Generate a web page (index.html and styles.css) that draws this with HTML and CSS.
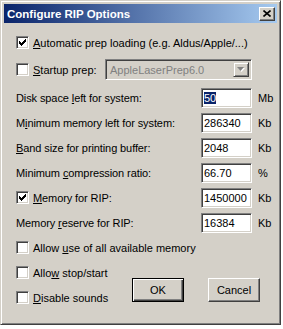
FILE: index.html
```html
<!DOCTYPE html>
<html lang="en">
<head>
  <meta charset="UTF-8" />
  <title>Configure RIP Options</title>
  <link rel="stylesheet" href="styles.css">
</head>
<body>
  <div class="window">
    <div class="titlebar">
      <span class="title">Configure RIP Options</span>
      <button class="close-btn" type="button">
        <svg width="8" height="7" viewBox="0 0 8 7"><path d="M0.5 0.5L7.5 6.5M7.5 0.5L0.5 6.5" stroke="#000" stroke-width="1.6" fill="none"/></svg>
      </button>
    </div>

    <div class="content">
      <div class="row row-first">
        <label class="check">
          <span class="box"><svg width="11" height="11" viewBox="0 0 11 11"><path d="M2 4h1v1h1v1h1v-1h1v-1h1v-1h1v-1h1v3h-1v1h-1v1h-1v1h-1v1h-1v-1h-1v-1h-1z" fill="#000"/></svg></span>
          <span><u>A</u>utomatic prep loading (e.g. Aldus/Apple/...)</span>
        </label>
      </div>

      <div class="row row-combo">
        <label class="check">
          <span class="box"></span>
          <span><u>S</u>tartup prep:</span>
        </label>
        <div class="combo">
          <span class="combo-text">AppleLaserPrep6.0</span>
          <span class="combo-btn">
            <svg width="8" height="5" viewBox="0 0 8 5"><path d="M1 1h7l-3.5 4z" fill="#fff"/><path d="M0 0h7l-3.5 4z" fill="#808080"/></svg>
          </span>
        </div>
      </div>

      <div class="fields">
        <div class="row">
          <span class="label">Disk space <u>l</u>eft for system:</span>
          <span class="input"><span class="sel">50</span></span>
          <span class="unit">Mb</span>
        </div>
        <div class="row">
          <span class="label">M<u>i</u>nimum memory left for system:</span>
          <span class="input">286340</span>
          <span class="unit">Kb</span>
        </div>
        <div class="row">
          <span class="label"><u>B</u>and size for printing buffer:</span>
          <span class="input">2048</span>
          <span class="unit">Kb</span>
        </div>
        <div class="row">
          <span class="label">Minimum <u>c</u>ompression ratio:</span>
          <span class="input">66.70</span>
          <span class="unit">%</span>
        </div>
        <div class="row">
          <label class="check label">
            <span class="box"><svg width="11" height="11" viewBox="0 0 11 11"><path d="M2 4h1v1h1v1h1v-1h1v-1h1v-1h1v-1h1v3h-1v1h-1v1h-1v1h-1v1h-1v-1h-1v-1h-1z" fill="#000"/></svg></span>
            <span><u>M</u>emory for RIP:</span>
          </label>
          <span class="input">1450000</span>
          <span class="unit">Kb</span>
        </div>
        <div class="row">
          <span class="label">Memory <u>r</u>eserve for RIP:</span>
          <span class="input">16384</span>
          <span class="unit">Kb</span>
        </div>
        <div class="row">
          <label class="check">
            <span class="box"></span>
            <span>Allow <u>u</u>se of all available memory</span>
          </label>
        </div>

        <div class="bottom">
          <div class="bottom-checks">
            <div class="row">
              <label class="check">
                <span class="box"></span>
                <span>Allo<u>w</u> stop/start</span>
              </label>
            </div>
            <div class="row">
              <label class="check">
                <span class="box"></span>
                <span><u>D</u>isable sounds</span>
              </label>
            </div>
          </div>
          <div class="buttons">
            <button class="btn btn-default" type="button">OK</button>
            <button class="btn" type="button">Cancel</button>
          </div>
        </div>
      </div>
    </div>
  </div>
</body>
</html>
```

FILE: styles.css
```css
body {
  margin: 0;
  background: #fff;
  font-family: "Liberation Sans", Arial, sans-serif;
  font-size: 11px;
  color: #000;
}

.window {
  width: 281px;
  height: 325px;
  box-sizing: border-box;
  padding: 3px;
  background: #d4d0c8;
  border: 1px solid;
  border-color: #d4d0c8 #404040 #404040 #d4d0c8;
  box-shadow: inset 1px 1px #fff, inset -1px -1px #808080;
  display: flex;
  flex-direction: column;
}

.titlebar {
  height: 19px;
  flex-shrink: 0;
  display: flex;
  align-items: center;
  padding-left: 3px;
  background: linear-gradient(to right, #0a246a, #a6caf0);
  color: #fff;
  font-weight: bold;
  font-size: 11.5px;
}

.close-btn {
  width: 16px;
  height: 14px;
  margin-left: auto;
  margin-right: 2px;
  padding: 0;
  box-sizing: border-box;
  background: #d4d0c8;
  border: 1px solid;
  border-color: #fff #404040 #404040 #fff;
  box-shadow: inset -1px -1px #808080;
  display: flex;
  align-items: center;
  justify-content: center;
}

.content {
  flex: 1;
  padding-left: 12px;
}

.row {
  height: 25px;
  display: flex;
  align-items: center;
}

.row-first {
  margin-top: 7px;
}

.row-combo {
  margin-top: 2px;
}

.fields {
  margin-top: 3px;
}

.check {
  display: flex;
  align-items: center;
}

.box {
  width: 13px;
  height: 13px;
  box-sizing: border-box;
  margin-right: 4px;
  background: #fff;
  border: 1px solid;
  border-color: #808080 #fff #fff #808080;
  box-shadow: inset 1px 1px #404040, inset -1px -1px #d4d0c8;
  flex-shrink: 0;
}

.box svg {
  display: block;
}

.label {
  flex: 1;
  letter-spacing: -0.1px;
}

.input {
  width: 51px;
  height: 20px;
  box-sizing: border-box;
  padding: 0 2px;
  background: #fff;
  border: 1px solid;
  border-color: #808080 #fff #fff #808080;
  box-shadow: inset 1px 1px #404040, inset -1px -1px #d4d0c8;
  display: flex;
  align-items: center;
}

.sel {
  background: #0a246a;
  color: #fff;
}

.unit {
  width: 19px;
  margin-left: 6px;
}

.combo {
  width: 147px;
  height: 21px;
  box-sizing: border-box;
  margin-left: auto;
  margin-right: 25px;
  padding: 2px;
  background: #d4d0c8;
  border: 1px solid;
  border-color: #808080 #fff #fff #808080;
  box-shadow: inset 1px 1px #404040, inset -1px -1px #d4d0c8;
  display: flex;
  align-items: center;
}

.combo-text {
  flex: 1;
  padding-left: 2px;
  color: #808080;
}

.combo-btn {
  width: 16px;
  height: 15px;
  box-sizing: border-box;
  border: 1px solid;
  border-color: #d4d0c8 #404040 #404040 #d4d0c8;
  box-shadow: inset 1px 1px #fff, inset -1px -1px #808080;
  display: flex;
  align-items: center;
  justify-content: center;
}

.combo-btn svg {
  display: block;
}

.bottom {
  display: flex;
}

.buttons {
  margin-left: auto;
  margin-right: 17px;
  margin-bottom: 8px;
  align-self: flex-end;
  display: flex;
  gap: 24px;
}

.btn {
  width: 52px;
  height: 24px;
  padding: 0;
  font-family: "Liberation Sans", Arial, sans-serif;
  font-size: 11px;
  color: #000;
  background: #d4d0c8;
  border: 1px solid;
  border-color: #fff #404040 #404040 #fff;
  box-shadow: inset -1px -1px #808080;
}

.btn-default {
  border: 1px solid #000;
  box-shadow: inset 1px 1px #fff, inset -1px -1px #404040, inset -2px -2px #808080;
}
```
